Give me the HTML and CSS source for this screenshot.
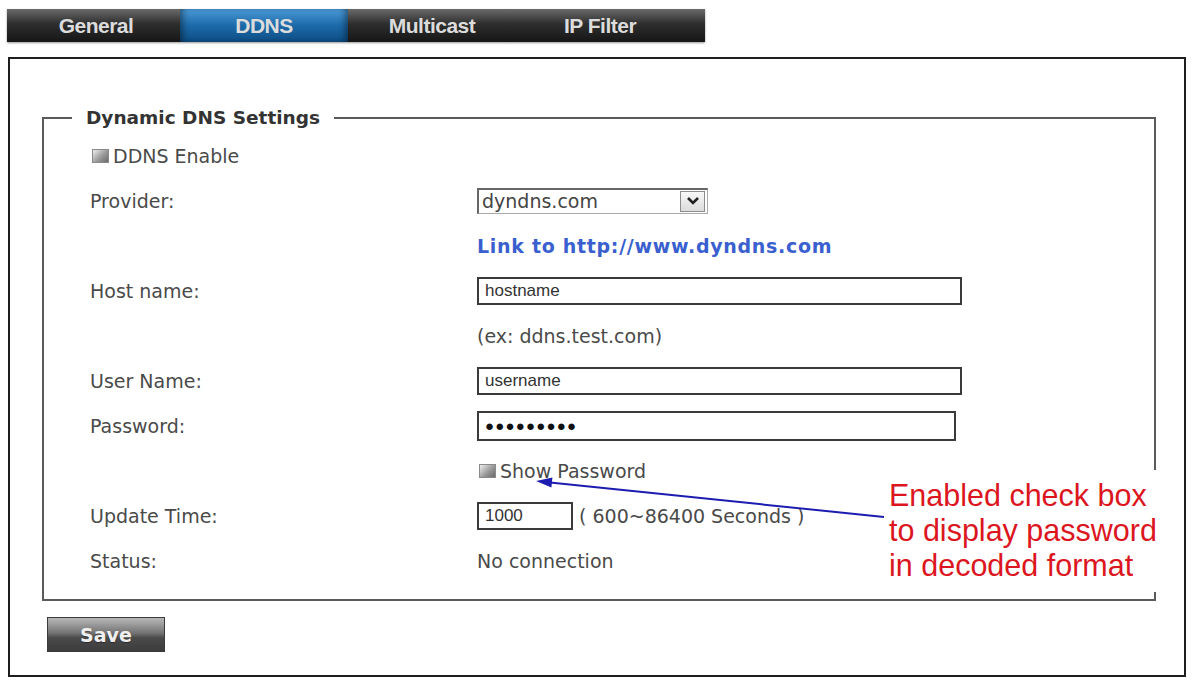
FILE: index.html
```html
<!DOCTYPE html>
<html lang="en">
<head>
    <meta charset="UTF-8">
    <title>DDNS</title>
    <link rel="stylesheet" href="styles.css">
</head>
<body>

    <div class="tabs">
        <div class="tab">General</div>
        <div class="tab active">DDNS</div>
        <div class="tab">Multicast</div>
        <div class="tab">IP Filter</div>
    </div>

    <div class="panel">
        <fieldset class="settings">
            <legend>Dynamic DNS Settings</legend>

            <div class="row">
                <span class="check"></span>DDNS Enable
            </div>
            <div class="row">
                <div class="label">Provider:</div>
                <div class="select">
                    <span class="select-text">dyndns.com</span>
                    <span class="select-btn">
                        <svg width="14" height="10" viewBox="0 0 14 10"><polyline points="2,2 7,7 12,2" fill="none" stroke="#222" stroke-width="2.6"/></svg>
                    </span>
                </div>
            </div>
            <div class="row">
                <div class="label"></div>
                <a class="link" href="#">Link to http://www.dyndns.com</a>
            </div>
            <div class="row">
                <div class="label">Host name:</div>
                <div class="input wide">hostname</div>
            </div>
            <div class="row">
                <div class="label"></div>
                <div>(ex: ddns.test.com)</div>
            </div>
            <div class="row">
                <div class="label">User Name:</div>
                <div class="input wide">username</div>
            </div>
            <div class="row">
                <div class="label">Password:</div>
                <div class="input pass">&#9679;&#9679;&#9679;&#9679;&#9679;&#9679;&#9679;&#9679;&#9679;</div>
            </div>
            <div class="row">
                <div class="label"></div>
                <span class="check"></span>Show Password
            </div>
            <div class="row">
                <div class="label">Update Time:</div>
                <div class="input short">1000</div>
                <span class="hint">( 600~86400 Seconds )</span>
            </div>
            <div class="row">
                <div class="label">Status:</div>
                <div>No connection</div>
            </div>
        </fieldset>

        <button class="save">Save</button>
    </div>

    <!-- annotation over the screenshot -->
    <svg class="arrow" width="360" height="55" viewBox="0 0 360 55">
        <line x1="354" y1="47" x2="20" y2="12.5" stroke="#1c1cb0" stroke-width="2"/>
        <polygon points="6,11 22.4,7.6 21.4,17.6" fill="#1c1cb0"/>
    </svg>
    <div class="note">
        Enabled check box<br>
        to display password<br>
        in decoded format
    </div>

</body>
</html>
```

FILE: styles.css
```css
* {
    box-sizing: border-box;
}

body {
    margin: 0;
    padding: 0;
    background: #fff;
    font-family: "DejaVu Sans", Verdana, sans-serif;
    color: #4a4a4a;
    position: relative;
    width: 1193px;
    height: 682px;
    overflow: hidden;
}

.tabs {
    display: flex;
    width: 698px;
    height: 33px;
    margin: 9px 0 0 7px;
    padding-left: 5px;
    background: linear-gradient(#6a6a6a, #2e2e2e 45%, #161616);
    box-shadow: 0 1px 2px rgba(0, 0, 0, 0.4);
}

.tab {
    width: 168px;
    display: flex;
    justify-content: center;
    align-items: center;
    font-family: "Liberation Sans", Arial, sans-serif;
    font-weight: bold;
    font-size: 21px;
    color: #dcdcdc;
    letter-spacing: -0.5px;
}

.tab.active {
    background: linear-gradient(#4b9ad6, #1c6aa9 50%, #0e4d84);
    box-shadow: inset 6px 0 6px -3px rgba(0, 0, 0, 0.4), inset -6px 0 6px -3px rgba(0, 0, 0, 0.4);
}

.panel {
    margin: 15px 7px 0 8px;
    border: 2px solid #1e1e1e;
    padding: 0 0 23px 0;
}

.settings {
    margin: 48px 28px 0 32px;
    border: 2px solid #5a5a5a;
    padding: 4px 0 16px 46px;
    min-width: 0;
}

.settings legend {
    margin-left: -18px;
    padding: 0 14px;
    font-weight: bold;
    font-size: 18.5px;
    line-height: 22px;
    color: #333;
}

.row {
    height: 45px;
    display: flex;
    align-items: center;
    font-size: 19px;
}

.label {
    width: 387px;
    flex-shrink: 0;
}

.check {
    display: inline-block;
    width: 17px;
    height: 14px;
    margin: 0 4px 0 2px;
    border: 1px solid #8a8a8a;
    background: linear-gradient(135deg, #eeeeee, #9a9a9a 55%, #6a6a6a);
}

.select {
    width: 231px;
    height: 26px;
    display: flex;
    align-items: center;
    justify-content: space-between;
    border-top: 2px solid #666;
    border-left: 2px solid #666;
    border-right: 1px solid #aaa;
    border-bottom: 1px solid #aaa;
    padding: 0 2px 0 3px;
}

.select-text {
    font-size: 19px;
    color: #444;
}

.select-btn {
    width: 25px;
    height: 21px;
    display: flex;
    justify-content: center;
    align-items: center;
    border: 1px solid #8c8c8c;
    background: linear-gradient(#f8f8f8, #dcdcdc);
}

.link {
    color: #3a5fcf;
    font-weight: bold;
    font-size: 19px;
    letter-spacing: 0.7px;
    text-decoration: none;
}

.input {
    height: 28px;
    border: 2px solid #3a3a3a;
    padding: 0 6px;
    display: flex;
    align-items: center;
    font-family: "Liberation Sans", Arial, sans-serif;
    font-size: 17px;
    color: #333;
}

.input.wide {
    width: 485px;
}

.input.pass {
    width: 479px;
    height: 30px;
    font-size: 15px;
    letter-spacing: 1.2px;
    color: #111;
}

.input.short {
    width: 96px;
}

.hint {
    margin-left: 6px;
}

.save {
    display: block;
    margin: 16px 0 0 37px;
    width: 118px;
    height: 35px;
    border: 1px solid #3a3a3a;
    background: linear-gradient(#b8b8b8, #747474 45%, #4a4a4a 60%, #3c3c3c);
    color: #efefef;
    font-family: "DejaVu Sans", Verdana, sans-serif;
    font-weight: bold;
    font-size: 19px;
    text-shadow: 0 1px 1px rgba(0, 0, 0, 0.4);
}

.arrow {
    position: absolute;
    left: 530px;
    top: 470px;
}

.note {
    position: absolute;
    left: 884px;
    top: 470px;
    width: 282px;
    padding: 8px 4px 9px 5px;
    background: #fff;
    font-family: "Liberation Sans", Arial, sans-serif;
    font-size: 30.5px;
    line-height: 35px;
    color: #dc161e;
}
```
